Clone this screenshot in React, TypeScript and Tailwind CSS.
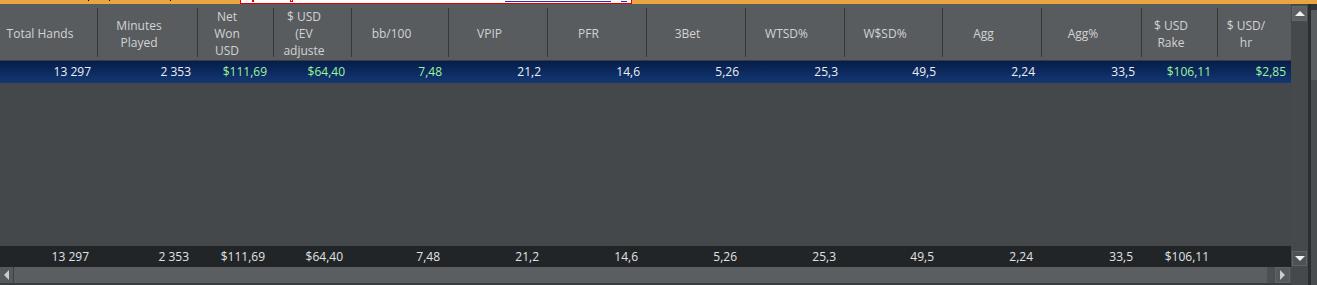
import React from "react";

type Col = { w: number; h: string[]; v: string; f: string; g?: boolean };

const cols: Col[] = [
  { w: 98, h: ["Total Hands"], v: "13 297", f: "13 297" },
  { w: 100, h: ["Minutes", "Played"], v: "2 353", f: "2 353" },
  { w: 76, h: ["Net", "Won", "USD"], v: "$111,69", f: "$111,69", g: true },
  { w: 78, h: ["$ USD", "(EV", "adjuste"], v: "$64,40", f: "$64,40", g: true },
  { w: 97, h: ["bb/100"], v: "7,48", f: "7,48", g: true },
  { w: 99, h: ["VPIP"], v: "21,2", f: "21,2" },
  { w: 99, h: ["PFR"], v: "14,6", f: "14,6" },
  { w: 99, h: ["3Bet"], v: "5,26", f: "5,26" },
  { w: 99, h: ["WTSD%"], v: "25,3", f: "25,3" },
  { w: 98, h: ["W$SD%"], v: "49,5", f: "49,5" },
  { w: 99, h: ["Agg"], v: "2,24", f: "2,24" },
  { w: 100, h: ["Agg%"], v: "33,5", f: "33,5" },
  { w: 76, h: ["$ USD", "Rake"], v: "$106,11", f: "$106,11", g: true },
  { w: 73, h: ["$ USD/", "hr"], v: "$2,85", f: "", g: true },
];

function Tri({ dir }: { dir: "up" | "down" | "left" | "right" }) {
  const pts =
    dir === "up"
      ? "0,5 5,0 10,5"
      : dir === "down"
      ? "0,0 10,0 5,5"
      : dir === "left"
      ? "5,0 5,10 0,5"
      : "0,0 0,10 5,5";
  const w = dir === "up" || dir === "down" ? 10 : 5;
  const h = dir === "up" || dir === "down" ? 5 : 10;
  return (
    <svg width={w} height={h} viewBox={`0 0 ${w} ${h}`}>
      <polygon points={pts} fill={dir === "up" || dir === "down" ? "#f2f2f2" : "#c9cbcd"} />
    </svg>
  );
}

export default function App() {
  return (
    <div className="w-[1317px] h-[285px] overflow-hidden bg-[#45484b] flex flex-col font-['Open_Sans',sans-serif] text-[12px]">
      {/* top orange strip */}
      <div className="relative h-[4px] shrink-0 bg-[#e9a540]">
        <div className="absolute left-[88px] top-0 w-px h-[1px] bg-black" />
        <div className="absolute left-[109px] top-0 w-px h-[1px] bg-black" />
        <div className="absolute left-[170px] top-0 w-px h-[1px] bg-black" />
        <div className="absolute left-[240px] top-0 w-[392px] h-[4px] bg-white border border-t-0 border-[#e00000]">
          <div className="absolute left-[11px] top-0 w-[2px] h-[2px] bg-[#e00000]" />
          <div className="absolute left-[49px] top-0 w-[3px] h-[2px] border border-t-0 border-[#e00000]" />
          <div className="absolute left-[264px] top-[1px] w-[106px] h-px bg-[#2a2ab8]" />
          <div className="absolute left-[380px] top-[1px] w-[6px] h-px bg-[#2a2ab8]" />
        </div>
      </div>
      <div className="flex flex-1 min-h-0">
        {/* table */}
        <div className="w-[1291px] flex flex-col">
          {/* header */}
          <div className="h-[56px] shrink-0 flex bg-[#595c5f] text-[#d2d3d4] leading-[17px]">
            {cols.map((c, i) => (
              <div key={i} className="flex h-full shrink-0" style={{ width: c.w }}>
                <div className="flex-1 flex flex-col items-center justify-center pt-[3px] pr-[17px] overflow-hidden whitespace-nowrap text-center">
                  {c.h.map((l, j) => (
                    <span key={j}>{l}</span>
                  ))}
                </div>
                {i < cols.length - 1 && <div className="w-px h-[49px] self-center bg-[#353739]" />}
              </div>
            ))}
          </div>
          <div className="h-px shrink-0 bg-[#3a3d40]" />
          {/* selected row */}
          <div className="h-[22px] shrink-0 flex items-center bg-gradient-to-b from-[#061d4b] to-[#143873] text-[#eef0f2]">
            {cols.map((c, i) => (
              <div
                key={i}
                className={`shrink-0 text-right whitespace-nowrap ${i === cols.length - 1 ? "pr-[5px]" : "pr-[7px]"} ${c.g ? "text-[#9cf59a]" : ""}`}
                style={{ width: c.w }}
              >
                {c.v}
              </div>
            ))}
          </div>
          <div className="flex-1 bg-[#45484b]" />
          {/* footer totals */}
          <div className="h-[21px] shrink-0 flex items-center bg-[#212528] text-[#e2e3e4]">
            {cols.map((c, i) => (
              <div key={i} className="shrink-0 text-right whitespace-nowrap pr-[9px]" style={{ width: c.w }}>
                {c.f}
              </div>
            ))}
          </div>
          {/* horizontal scrollbar */}
          <div className="h-[16px] shrink-0 flex bg-[#4b4f52]">
            <div className="w-[13px] flex items-center justify-center bg-[#55595c]">
              <Tri dir="left" />
            </div>
            <div className="w-px bg-[#3f4245]" />
            <div className="w-[1253px] bg-[#5a5e61]" />
            <div className="w-[8px]" />
            <div className="w-[15px] flex items-center justify-center bg-[#55595c] border border-[#5f6366]">
              <Tri dir="right" />
            </div>
          </div>
          <div className="h-[2px] shrink-0 bg-[#3a3d40]" />
        </div>
        {/* vertical scrollbar */}
        <div className="w-[17px] flex flex-col bg-[#45494c]">
          <div className="h-[2px] shrink-0" />
          <div className="h-[15px] shrink-0 mx-px flex items-center justify-center bg-[#5c6063] border border-[#64686b]">
            <Tri dir="up" />
          </div>
          <div className="flex-1 bg-[#45494c]" />
          <div className="h-[15px] shrink-0 mx-px flex items-center justify-center bg-[#4e5255] border border-[#5f6366]">
            <Tri dir="down" />
          </div>
          <div className="h-[19px] shrink-0" />
        </div>
        {/* right edge */}
        <div className="w-[3px] bg-[#2b2e31]" />
        <div className="flex-1 flex flex-col">
          <div className="h-[6px] bg-[#333639]" />
          <div className="h-[70px] bg-[#5a5d60]" />
          <div className="flex-1 bg-[#4a4d50]" />
        </div>
      </div>
    </div>
  );
}
